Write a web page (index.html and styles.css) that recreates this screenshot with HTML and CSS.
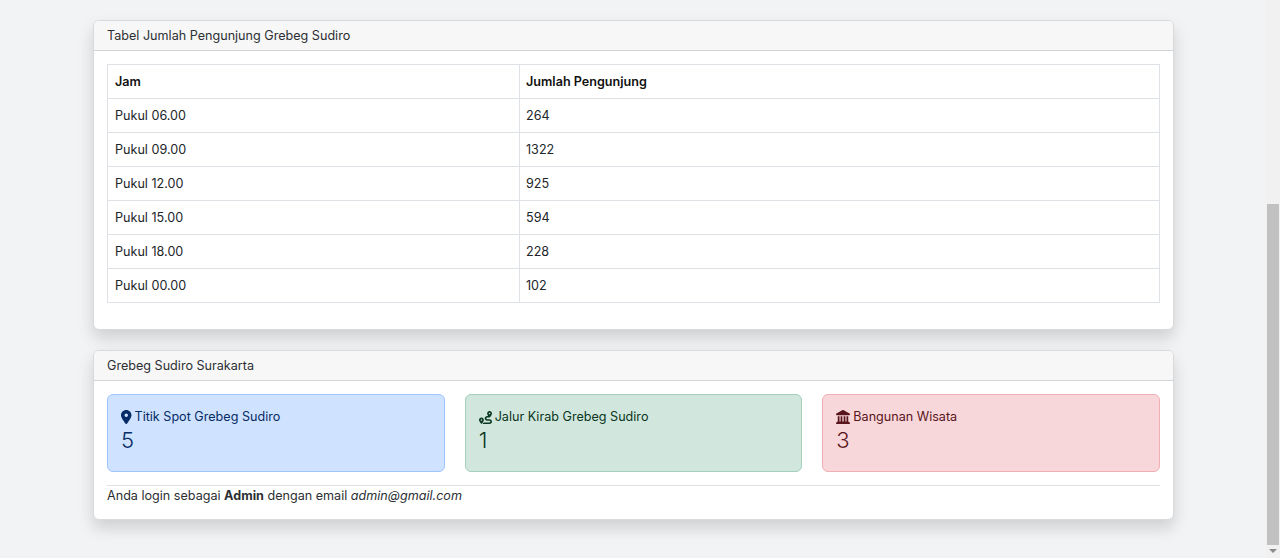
FILE: index.html
```html
<!DOCTYPE html>
<html lang="id">
<head>
 <meta charset="UTF-8">
 <title>Grebeg Sudiro</title>
 <link rel="stylesheet" href="styles.css">
</head>
<body>

 <div class="halaman">
  <main class="container">

   <section class="card">
    <div class="card-header">Tabel Jumlah Pengunjung Grebeg Sudiro</div>
    <div class="card-body body-tabel">
     <table>
      <thead>
       <tr><th class="kolom-jam">Jam</th><th>Jumlah Pengunjung</th></tr>
      </thead>
      <tbody>
       <tr><td>Pukul 06.00</td><td>264</td></tr>
       <tr><td>Pukul 09.00</td><td>1322</td></tr>
       <tr><td>Pukul 12.00</td><td>925</td></tr>
       <tr><td>Pukul 15.00</td><td>594</td></tr>
       <tr><td>Pukul 18.00</td><td>228</td></tr>
       <tr><td>Pukul 00.00</td><td>102</td></tr>
      </tbody>
     </table>
    </div>
   </section>

   <section class="card">
    <div class="card-header">Grebeg Sudiro Surakarta</div>
    <div class="card-body">
     <div class="stat-row">
      <div class="alert alert-primary">
       <div class="stat-label">
        <svg class="ikon" viewBox="0 0 384 512"><path d="M215.7 499.2C267 435 384 279.4 384 192C384 86 298 0 192 0S0 86 0 192c0 87.4 117 243 168.3 307.2c12.3 15.3 35.1 15.3 47.4 0zM192 128a64 64 0 1 1 0 128 64 64 0 1 1 0-128z"/></svg>
        Titik Spot Grebeg Sudiro
       </div>
       <div class="stat-value">5</div>
      </div>
      <div class="alert alert-success">
       <div class="stat-label">
        <svg class="ikon ikon-rute" viewBox="0 0 512 512"><path d="M512 96c0 50.2-59.1 125.1-84.6 155c-3.8 4.4-9.4 6.1-14.5 5H320c-17.7 0-32 14.3-32 32s14.3 32 32 32h96c53 0 96 43 96 96s-43 96-96 96H139.6c8.7-9.9 19.3-22.6 30-36.8c6.3-8.4 12.8-17.6 19-27.2H416c17.7 0 32-14.3 32-32s-14.3-32-32-32H320c-53 0-96-43-96-96s43-96 96-96h39.8c-21-31.5-39.8-67.7-39.8-96c0-53 43-96 96-96s96 43 96 96zM117.1 489.1c-3.8 4.3-7.2 8.1-10.1 11.3l-1.8 2-.2-.2c-6 4.6-14.6 4-20-1.8C59.8 473 0 402.5 0 352c0-53 43-96 96-96s96 43 96 96c0 30-21.1 67-43.5 97.9c-10.7 14.7-21.7 28-30.8 38.5l-.6 .7zM128 352a32 32 0 1 0 -64 0 32 32 0 1 0 64 0zM416 128a32 32 0 1 0 0-64 32 32 0 1 0 0 64z"/></svg>
        Jalur Kirab Grebeg Sudiro
       </div>
       <div class="stat-value">1</div>
      </div>
      <div class="alert alert-danger">
       <div class="stat-label">
        <svg class="ikon" viewBox="0 0 512 512"><path d="M240.1 4.2c9.8-5.6 21.9-5.6 31.8 0l171.8 98.1L448 104l0 .9 47.9 27.4c12.6 7.2 18.8 22 15.1 36s-16.4 23.8-30.9 23.8H32c-14.5 0-27.2-9.8-30.9-23.8s2.5-28.8 15.1-36L64 104.9V104l4.4-1.6L240.1 4.2zM64 224h64V416h40V224h64V416h48V224h64V416h40V224h64V420.3c.6 .3 1.2 .7 1.8 1.1l48 32c11.7 7.8 17 22.4 12.9 35.9S494.1 512 480 512H32c-14.1 0-26.5-9.2-30.6-22.7s1.1-28.1 12.9-35.9l48-32c.6-.4 1.2-.7 1.8-1.1V224z"/></svg>
        Bangunan Wisata
       </div>
       <div class="stat-value">3</div>
      </div>
     </div>
     <div class="login-info">Anda login sebagai <strong>Admin</strong> dengan email <em>admin@gmail.com</em></div>
    </div>
   </section>

  </main>

  <div class="scrollbar">
   <div class="scroll-atas"></div>
   <div class="scroll-thumb"></div>
   <div class="scroll-panah"></div>
  </div>
 </div>

</body>
</html>
```

FILE: styles.css
```css
* {
 box-sizing: border-box;
}

html, body {
 height: 100%;
}

body {
 margin: 0;
 font-family: Inter, "Liberation Sans", sans-serif;
 font-size: 12.6px;
 line-height: 20px;
 color: #2b2f33;
 background-color: #f1f3f5;
 overflow: hidden;
}

.halaman {
 display: flex;
 height: 558px;
}

.container {
 flex: 1;
 padding: 20px 92px 0 93px;
}

.card {
 background: #fff;
 border: 1px solid #d9dadb;
 border-radius: 6px;
 box-shadow: 0 8px 16px rgba(0,0,0,0.15);
 margin-bottom: 20px;
}

.card-header {
 height: 30px;
 padding: 5px 13px;
 background-color: #f7f7f7;
 border-bottom: 1px solid #d3d4d5;
 border-radius: 5px 5px 0 0;
}

.card-body {
 padding: 13px;
}

.body-tabel {
 padding-bottom: 26px;
}

table {
 width: 100%;
 border-collapse: collapse;
}

th, td {
 height: 34px;
 padding: 6px 7px;
 border: 1px solid #dee2e6;
 text-align: left;
 color: #212529;
}

th {
 font-weight: 600;
 color: #111;
}

th + th, td + td {
 padding-left: 6px;
}

.kolom-jam {
 width: 412px;
}

.stat-row {
 display: flex;
 gap: 20px;
}

.alert {
 flex: 1;
 height: 78px;
 padding: 12px 13px;
 border: 1px solid;
 border-radius: 6px;
}

.alert-primary {
 background-color: #cfe2ff;
 border-color: #9ec5fe;
 color: #052c65;
}

.alert-success {
 background-color: #d1e7dd;
 border-color: #a3cfbb;
 color: #0a3622;
}

.alert-danger {
 background-color: #f8d7da;
 border-color: #f1aeb5;
 color: #58151c;
}

.stat-label {
 display: flex;
 align-items: center;
 gap: 3px;
 height: 20px;
}

.ikon {
 height: 14px;
 fill: currentColor;
}

.ikon-rute {
 height: 13px;
}

.stat-value {
 font-size: 22px;
 line-height: 26px;
 font-weight: 300;
}

.login-info {
 margin-top: 13px;
 border-top: 1px solid #dee2e6;
 height: 21px;
 line-height: 19px;
}

.scrollbar {
 width: 14px;
 display: flex;
 flex-direction: column;
 background-color: #f1f1f1;
}

.scroll-atas {
 height: 204px;
}

.scroll-thumb {
 flex: 1;
 margin: 0 1px;
 background-color: #c1c1c1;
}

.scroll-panah {
 height: 13px;
 position: relative;
}

.scroll-panah::after {
 content: "";
 position: absolute;
 left: 3px;
 top: 4px;
 border: 4px solid transparent;
 border-top: 4px solid #8a8a8a;
 border-bottom: 0;
}
```
